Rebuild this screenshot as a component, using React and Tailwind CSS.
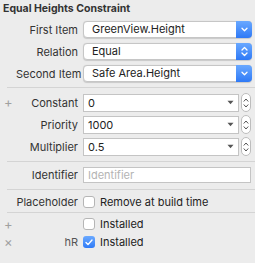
import React from 'react';

const font = { fontFamily: 'Inter, "Noto Sans", sans-serif' };

const ChevronDown = () => (
  <svg width="7" height="5" viewBox="0 0 7 5" fill="none">
    <path d="M1 1.2 L3.5 3.7 L6 1.2" stroke="white" strokeWidth="1.3" strokeLinecap="round" strokeLinejoin="round" />
  </svg>
);

const ChevronUpDown = () => (
  <svg width="7" height="11" viewBox="0 0 7 11" fill="none">
    <path d="M1 4 L3.5 1.5 L6 4" stroke="white" strokeWidth="1.3" strokeLinecap="round" strokeLinejoin="round" />
    <path d="M1 7 L3.5 9.5 L6 7" stroke="white" strokeWidth="1.3" strokeLinecap="round" strokeLinejoin="round" />
  </svg>
);

const Popup = ({ value, upDown }) => (
  <div className="flex h-[17px] w-[169px] items-stretch rounded-[4px] border border-[#c6c6c6] bg-white shadow-[0_0.5px_1px_rgba(0,0,0,0.15)]">
    <span className="flex-1 pl-[8px] text-[11px] leading-[15px] text-[#222]">{value}</span>
    <span className="-my-px -mr-px flex w-[16px] items-center justify-center rounded-r-[4px] bg-gradient-to-b from-[#69a8ff] to-[#2e79f6]">
      {upDown ? <ChevronUpDown /> : <ChevronDown />}
    </span>
  </div>
);

const Stepper = () => (
  <div className="flex h-[19px] w-[10px] flex-col items-center justify-center gap-[2px] rounded-full border border-[#bdbdbd] bg-white">
    <svg width="6" height="4" viewBox="0 0 6 4" fill="none">
      <path d="M1 3.2 L3 1 L5 3.2" stroke="#555" strokeWidth="1" strokeLinecap="round" />
    </svg>
    <svg width="6" height="4" viewBox="0 0 6 4" fill="none">
      <path d="M1 0.8 L3 3 L5 0.8" stroke="#555" strokeWidth="1" strokeLinecap="round" />
    </svg>
  </div>
);

const Combo = ({ value }) => (
  <div className="flex items-center gap-[2px]">
    <div className="flex h-[18px] w-[156px] items-center border border-[#c4c4c4] bg-white">
      <span className="flex-1 pl-[4px] text-[11px] leading-[16px] text-[#222]">{value}</span>
      <svg className="mr-[4px]" width="7" height="5" viewBox="0 0 7 5">
        <path d="M0.5 0.8 H6.5 L3.5 4.2 Z" fill="#555" />
      </svg>
    </div>
    <Stepper />
  </div>
);

const Label = ({ children, gutter }) => (
  <div className="flex h-[16px] w-[78px] shrink-0 items-center">
    <span className="w-[16px] shrink-0 pl-[4px] text-[13px] leading-none text-[#a0a0a0]">{gutter}</span>
    <span className="flex flex-1 justify-end whitespace-nowrap text-[11px] leading-[16px] text-[#333]">{children}</span>
  </div>
);

const Row = ({ label, gutter, children, className = '' }) => (
  <div className={`flex items-center gap-[5px] ${className}`}>
    <Label gutter={gutter}>{label}</Label>
    {children}
  </div>
);

const Sep = ({ className = '' }) => <div className={`ml-[7px] h-px bg-[#d4d4d4] ${className}`} />;

const Checkbox = ({ checked }) =>
  checked ? (
    <span className="flex h-[12px] w-[12px] items-center justify-center rounded-[3px] bg-gradient-to-b from-[#6aa9ff] to-[#2f7af6]">
      <svg width="8" height="7" viewBox="0 0 8 7" fill="none">
        <path d="M1 3.6 L3 5.6 L7 1" stroke="white" strokeWidth="1.4" strokeLinecap="round" strokeLinejoin="round" />
      </svg>
    </span>
  ) : (
    <span className="h-[12px] w-[12px] rounded-[3px] border border-[#b5b5b5] bg-white" />
  );

export default function App() {
  return (
    <div className="h-[263px] w-[255px] overflow-hidden bg-[#ececec]" style={font}>
      <div className="h-[21px] whitespace-nowrap pl-[3px] pt-[1px] text-[10.5px] font-bold leading-[15px] text-[#333]">
        Equal Heights Constraint
      </div>

      <div className="flex flex-col gap-[5px]">
        <Row label="First Item"><Popup value="GreenView.Height" /></Row>
        <Row label="Relation"><Popup value="Equal" upDown /></Row>
        <Row label="Second Item"><Popup value="Safe Area.Height" /></Row>
      </div>

      <Sep className="mt-[5px]" />

      <div className="mt-[5px] flex flex-col gap-[3px]">
        <Row label="Constant" gutter="+"><Combo value="0" /></Row>
        <Row label="Priority"><Combo value="1000" /></Row>
        <Row label="Multiplier"><Combo value="0.5" /></Row>
      </div>

      <Sep className="mt-[5px]" />

      <Row label="Identifier" className="mt-[5px]">
        <div className="flex h-[16px] w-[168px] items-center border border-[#c4c4c4] bg-white pl-[4px] text-[11px] text-[#b4b4b4]">
          Identifier
        </div>
      </Row>

      <Sep className="mt-[6px]" />

      <Row label="Placeholder" className="mt-[4px]">
        <Checkbox />
        <span className="text-[11px] leading-[16px] text-[#222]">Remove at build time</span>
      </Row>

      <Sep className="mt-[2px]" />

      <div className="mt-[3px] flex flex-col gap-[2px]">
        <Row gutter="+">
          <Checkbox />
          <span className="text-[11px] leading-[16px] text-[#222]">Installed</span>
        </Row>
        <Row gutter="×" label={<span className="text-[#555]">hR</span>}>
          <Checkbox checked />
          <span className="text-[11px] leading-[16px] text-[#222]">Installed</span>
        </Row>
      </div>
    </div>
  );
}
